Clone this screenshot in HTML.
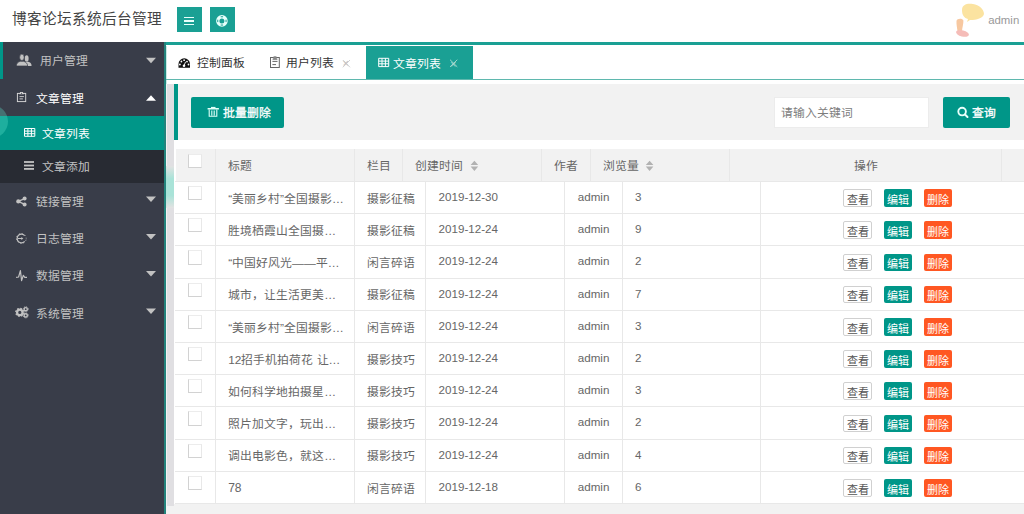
<!DOCTYPE html>
<html lang="zh-CN"><head><meta charset="utf-8">
<style>
*{margin:0;padding:0;box-sizing:border-box}
html,body{width:1024px;height:514px;overflow:hidden;background:#fff;font-family:"Liberation Sans",sans-serif;}
.a{position:absolute}
.t{position:absolute;white-space:nowrap}
svg{position:absolute;overflow:visible}
</style></head><body>
<div class="t" style="left:12px;top:11.9px;font-size:14.65px;line-height:14.65px;color:#444;">博客论坛系统后台管理</div>
<div class="a" style="left:177px;top:7px;width:24.5px;height:25px;background:#1aa094;"></div>
<div class="a" style="left:210px;top:7px;width:24.5px;height:25px;background:#1aa094;"></div>
<div class="a" style="left:184px;top:16.5px;width:10px;height:1.6px;background:#e8fffb;"></div>
<div class="a" style="left:184px;top:20.2px;width:10px;height:1.6px;background:#e8fffb;"></div>
<div class="a" style="left:184px;top:23.9px;width:10px;height:1.6px;background:#e8fffb;"></div>
<svg style="left:0;top:0" width="1024" height="42"><path d="M962 10 C962 4 968 3 973 4 C979 5 984 9 984 14 C983 18 977 20 970 20 L967 22 L968 19 C964 18 962 15 962 10Z" fill="#fbe3a0"/><path d="M956.5 21 C956.8 18.3 962.5 18 963.4 20.5 C963.6 23.5 962.2 27.5 962 31.5 L957.6 31.5 C957 28 956.3 24 956.5 21Z" fill="#f7c8a0"/><ellipse cx="962.5" cy="33.4" rx="6.6" ry="3.1" transform="rotate(14 962.5 33.4)" fill="#f5bcb8"/></svg>
<div class="t" style="left:988.2px;top:15.3px;font-size:11.4px;line-height:11.4px;color:#999;">admin</div>
<div class="a" style="left:0px;top:42px;width:164px;height:472px;background:#393d49;"></div>
<div class="a" style="left:0px;top:42px;width:3px;height:37px;background:#009688;"></div>
<div class="a" style="left:0px;top:116px;width:164px;height:33.5px;background:#009688;"></div>
<div class="a" style="left:0px;top:149.5px;width:164px;height:33px;background:#282b33;"></div>
<div class="t" style="left:40px;top:56.4px;font-size:11.8px;line-height:11.8px;color:#c2c2c2;">用户管理</div>
<div class="t" style="left:36px;top:93.9px;font-size:11.8px;line-height:11.8px;color:#fff;">文章管理</div>
<div class="t" style="left:42.3px;top:129.4px;font-size:11.8px;line-height:11.8px;color:#fff;">文章列表</div>
<div class="t" style="left:42px;top:161.9px;font-size:11.8px;line-height:11.8px;color:#c2c2c2;">文章添加</div>
<div class="t" style="left:36px;top:196.9px;font-size:11.8px;line-height:11.8px;color:#c2c2c2;">链接管理</div>
<div class="t" style="left:36px;top:234.4px;font-size:11.8px;line-height:11.8px;color:#c2c2c2;">日志管理</div>
<div class="t" style="left:36px;top:271.4px;font-size:11.8px;line-height:11.8px;color:#c2c2c2;">数据管理</div>
<div class="t" style="left:36px;top:308.9px;font-size:11.8px;line-height:11.8px;color:#c2c2c2;">系统管理</div>
<svg style="left:0;top:0" width="1" height="1"><path d="M146 57.8L156 57.8L151 63.3Z" fill="#c2c2c2"/></svg>
<svg style="left:0;top:0" width="1" height="1"><path d="M146 100.7L156 100.7L151 95.2Z" fill="#fff"/></svg>
<svg style="left:0;top:0" width="1" height="1"><path d="M146 196.5L156 196.5L151 202.0Z" fill="#c2c2c2"/></svg>
<svg style="left:0;top:0" width="1" height="1"><path d="M146 234L156 234L151 239.5Z" fill="#c2c2c2"/></svg>
<svg style="left:0;top:0" width="1" height="1"><path d="M146 271L156 271L151 276.5Z" fill="#c2c2c2"/></svg>
<svg style="left:0;top:0" width="1" height="1"><path d="M146 308.5L156 308.5L151 314.0Z" fill="#c2c2c2"/></svg>
<div class="a" style="left:164px;top:42px;width:2px;height:472px;background:#23837c;"></div>
<div class="a" style="left:166px;top:45.5px;width:1px;height:472px;background:#c8ebe5;"></div>
<div class="a" style="left:166px;top:42px;width:858px;height:3.4px;background:#1aa094;"></div>
<div class="a" style="left:166px;top:79px;width:858px;height:1px;background:#5fb8ae;"></div>
<div class="a" style="left:366px;top:46.3px;width:107px;height:32.7px;background:#1aa094;"></div>
<div class="t" style="left:197px;top:58.4px;font-size:11.8px;line-height:11.8px;color:#333;">控制面板</div>
<div class="t" style="left:285.5px;top:58.4px;font-size:11.8px;line-height:11.8px;color:#333;">用户列表</div>
<div class="t" style="left:392.5px;top:58.9px;font-size:11.8px;line-height:11.8px;color:#fff;">文章列表</div>
<div class="t" style="left:342.5px;top:58px;font-size:11px;line-height:11px;color:#bbb;">×</div>
<div class="t" style="left:450px;top:58.5px;font-size:11px;line-height:11px;color:#9fd6cf;">×</div>
<div class="a" style="left:166px;top:84px;width:858px;height:430px;background:#f2f2f2;"></div>
<div class="a" style="left:167px;top:84px;width:7px;height:422px;background:#e0dfe2;"></div>
<div class="a" style="left:174px;top:84px;width:4.4px;height:56px;background:#009688;"></div>
<div class="a" style="left:174px;top:140px;width:850px;height:363.5px;background:#fff;"></div>
<div class="a" style="left:191px;top:97px;width:93px;height:31px;background:#009688;border-radius:2px"></div>
<div class="t" style="left:223px;top:108.4px;font-size:11.8px;line-height:11.8px;color:#fff;-webkit-text-stroke:0.3px #fff">批量删除</div>
<div class="a" style="left:773.5px;top:97px;width:155.5px;height:30.5px;background:#fff;border:1px solid #ececec"></div>
<div class="t" style="left:781.3px;top:108.4px;font-size:11.8px;line-height:11.8px;color:#7d7d7d;">请输入关键词</div>
<div class="a" style="left:943px;top:97px;width:66.5px;height:31px;background:#009688;border-radius:2px"></div>
<div class="t" style="left:971.5px;top:107.9px;font-size:11.8px;line-height:11.8px;color:#fff;-webkit-text-stroke:0.3px #fff">查询</div>
<div class="a" style="left:175.5px;top:148.8px;width:848.5px;height:32.599999999999994px;background:#f2f2f2;"></div>
<div class="a" style="left:214.8px;top:148.8px;width:1px;height:32.599999999999994px;background:#e8e8e8;"></div>
<div class="a" style="left:353.7px;top:148.8px;width:1px;height:32.599999999999994px;background:#e8e8e8;"></div>
<div class="a" style="left:401.8px;top:148.8px;width:1px;height:32.599999999999994px;background:#e8e8e8;"></div>
<div class="a" style="left:540.9px;top:148.8px;width:1px;height:32.599999999999994px;background:#e8e8e8;"></div>
<div class="a" style="left:589.9px;top:148.8px;width:1px;height:32.599999999999994px;background:#e8e8e8;"></div>
<div class="a" style="left:728.9px;top:148.8px;width:1px;height:32.599999999999994px;background:#e8e8e8;"></div>
<div class="a" style="left:1001.0px;top:148.8px;width:1px;height:32.599999999999994px;background:#e8e8e8;"></div>
<div class="a" style="left:174.5px;top:180.9px;width:849.5px;height:1px;background:#e8e8e8;"></div>
<div class="a" style="left:174.5px;top:213.10000000000002px;width:849.5px;height:1px;background:#e8e8e8;"></div>
<div class="a" style="left:174.5px;top:245.3px;width:849.5px;height:1px;background:#e8e8e8;"></div>
<div class="a" style="left:174.5px;top:277.5px;width:849.5px;height:1px;background:#e8e8e8;"></div>
<div class="a" style="left:174.5px;top:309.70000000000005px;width:849.5px;height:1px;background:#e8e8e8;"></div>
<div class="a" style="left:174.5px;top:341.9px;width:849.5px;height:1px;background:#e8e8e8;"></div>
<div class="a" style="left:174.5px;top:374.1px;width:849.5px;height:1px;background:#e8e8e8;"></div>
<div class="a" style="left:174.5px;top:406.30000000000007px;width:849.5px;height:1px;background:#e8e8e8;"></div>
<div class="a" style="left:174.5px;top:438.5px;width:849.5px;height:1px;background:#e8e8e8;"></div>
<div class="a" style="left:174.5px;top:470.70000000000005px;width:849.5px;height:1px;background:#e8e8e8;"></div>
<div class="a" style="left:174.5px;top:502.9px;width:849.5px;height:1px;background:#e8e8e8;"></div>
<div class="a" style="left:214.8px;top:181.4px;width:1px;height:322.0px;background:#e8e8e8;"></div>
<div class="a" style="left:353.7px;top:181.4px;width:1px;height:322.0px;background:#e8e8e8;"></div>
<div class="a" style="left:425.1px;top:181.4px;width:1px;height:322.0px;background:#e8e8e8;"></div>
<div class="a" style="left:564.1px;top:181.4px;width:1px;height:322.0px;background:#e8e8e8;"></div>
<div class="a" style="left:621.7px;top:181.4px;width:1px;height:322.0px;background:#e8e8e8;"></div>
<div class="a" style="left:760.3px;top:181.4px;width:1px;height:322.0px;background:#e8e8e8;"></div>
<div class="t" style="left:228.2px;top:161.4px;font-size:11.8px;line-height:11.8px;color:#666;">标题</div>
<div class="t" style="left:367px;top:161.4px;font-size:11.8px;line-height:11.8px;color:#666;">栏目</div>
<div class="t" style="left:414.8px;top:161.4px;font-size:11.8px;line-height:11.8px;color:#666;">创建时间</div>
<div class="t" style="left:554.2px;top:161.4px;font-size:11.8px;line-height:11.8px;color:#666;">作者</div>
<div class="t" style="left:602.6px;top:161.4px;font-size:11.8px;line-height:11.8px;color:#666;">浏览量</div>
<div class="t" style="left:854px;top:161.2px;font-size:11.8px;line-height:11.8px;color:#666;">操作</div>
<svg style="left:0;top:0" width="1" height="1"><path d="M470.6 165L478.20000000000005 165L474.40000000000003 160.7Z M470.6 166.5L478.20000000000005 166.5L474.40000000000003 170.9Z" fill="#b2b2b2"/></svg>
<svg style="left:0;top:0" width="1" height="1"><path d="M645.8 165L653.4 165L649.5999999999999 160.7Z M645.8 166.5L653.4 166.5L649.5999999999999 170.9Z" fill="#b2b2b2"/></svg>
<div class="a" style="left:187.6px;top:153.7px;width:14px;height:13.9px;background:#fff;border:1px solid;border-color:#ececec #e8e8e8 #d2d2d2 #d2d2d2"></div>
<div class="a" style="left:187.6px;top:186.0px;width:14px;height:14.2px;background:#fff;border:1px solid;border-color:#ececec #e8e8e8 #d2d2d2 #d2d2d2"></div>
<div class="t" style="left:228.2px;top:193.8px;font-size:11.8px;line-height:11.8px;color:#666;">“美丽乡村”全国摄影…</div>
<div class="t" style="left:366.8px;top:193.8px;font-size:11.8px;line-height:11.8px;color:#666;">摄影征稿</div>
<div class="t" style="left:438.6px;top:191.0px;font-size:11.6px;line-height:11.6px;color:#666;">2019-12-30</div>
<div class="t" style="left:577.8px;top:191.0px;font-size:11.6px;line-height:11.6px;color:#666;">admin</div>
<div class="t" style="left:634.9px;top:191.0px;font-size:11.6px;line-height:11.6px;color:#666;">3</div>
<div class="a" style="left:843.3px;top:189.1px;width:28.6px;height:17.7px;background:#fff;border:1px solid #d0d0d0;border-radius:2px"></div>
<div class="t" style="left:846.8px;top:194.7px;font-size:11px;line-height:11px;color:#555;">查看</div>
<div class="a" style="left:884.1px;top:189.1px;width:27.8px;height:17.7px;background:#009688;border-radius:2px"></div>
<div class="t" style="left:887px;top:194.7px;font-size:11px;line-height:11px;color:#fff;">编辑</div>
<div class="a" style="left:923.9px;top:189.1px;width:27.7px;height:17.7px;background:#ff5722;border-radius:2px"></div>
<div class="t" style="left:927px;top:194.7px;font-size:11px;line-height:11px;color:#fff;">删除</div>
<div class="a" style="left:187.6px;top:218.20000000000002px;width:14px;height:14.2px;background:#fff;border:1px solid;border-color:#ececec #e8e8e8 #d2d2d2 #d2d2d2"></div>
<div class="t" style="left:228.2px;top:226.0px;font-size:11.8px;line-height:11.8px;color:#666;">胜境栖霞山全国摄…</div>
<div class="t" style="left:366.8px;top:226.0px;font-size:11.8px;line-height:11.8px;color:#666;">摄影征稿</div>
<div class="t" style="left:438.6px;top:223.20000000000002px;font-size:11.6px;line-height:11.6px;color:#666;">2019-12-24</div>
<div class="t" style="left:577.8px;top:223.20000000000002px;font-size:11.6px;line-height:11.6px;color:#666;">admin</div>
<div class="t" style="left:634.9px;top:223.20000000000002px;font-size:11.6px;line-height:11.6px;color:#666;">9</div>
<div class="a" style="left:843.3px;top:221.3px;width:28.6px;height:17.7px;background:#fff;border:1px solid #d0d0d0;border-radius:2px"></div>
<div class="t" style="left:846.8px;top:226.9px;font-size:11px;line-height:11px;color:#555;">查看</div>
<div class="a" style="left:884.1px;top:221.3px;width:27.8px;height:17.7px;background:#009688;border-radius:2px"></div>
<div class="t" style="left:887px;top:226.9px;font-size:11px;line-height:11px;color:#fff;">编辑</div>
<div class="a" style="left:923.9px;top:221.3px;width:27.7px;height:17.7px;background:#ff5722;border-radius:2px"></div>
<div class="t" style="left:927px;top:226.9px;font-size:11px;line-height:11px;color:#fff;">删除</div>
<div class="a" style="left:187.6px;top:250.4px;width:14px;height:14.2px;background:#fff;border:1px solid;border-color:#ececec #e8e8e8 #d2d2d2 #d2d2d2"></div>
<div class="t" style="left:228.2px;top:258.2px;font-size:11.8px;line-height:11.8px;color:#666;">“中国好风光——平…</div>
<div class="t" style="left:366.8px;top:258.2px;font-size:11.8px;line-height:11.8px;color:#666;">闲言碎语</div>
<div class="t" style="left:438.6px;top:255.4px;font-size:11.6px;line-height:11.6px;color:#666;">2019-12-24</div>
<div class="t" style="left:577.8px;top:255.4px;font-size:11.6px;line-height:11.6px;color:#666;">admin</div>
<div class="t" style="left:634.9px;top:255.4px;font-size:11.6px;line-height:11.6px;color:#666;">2</div>
<div class="a" style="left:843.3px;top:253.5px;width:28.6px;height:17.7px;background:#fff;border:1px solid #d0d0d0;border-radius:2px"></div>
<div class="t" style="left:846.8px;top:259.1px;font-size:11px;line-height:11px;color:#555;">查看</div>
<div class="a" style="left:884.1px;top:253.5px;width:27.8px;height:17.7px;background:#009688;border-radius:2px"></div>
<div class="t" style="left:887px;top:259.1px;font-size:11px;line-height:11px;color:#fff;">编辑</div>
<div class="a" style="left:923.9px;top:253.5px;width:27.7px;height:17.7px;background:#ff5722;border-radius:2px"></div>
<div class="t" style="left:927px;top:259.1px;font-size:11px;line-height:11px;color:#fff;">删除</div>
<div class="a" style="left:187.6px;top:282.6px;width:14px;height:14.2px;background:#fff;border:1px solid;border-color:#ececec #e8e8e8 #d2d2d2 #d2d2d2"></div>
<div class="t" style="left:228.2px;top:290.4px;font-size:11.8px;line-height:11.8px;color:#666;">城市，让生活更美…</div>
<div class="t" style="left:366.8px;top:290.4px;font-size:11.8px;line-height:11.8px;color:#666;">摄影征稿</div>
<div class="t" style="left:438.6px;top:287.6px;font-size:11.6px;line-height:11.6px;color:#666;">2019-12-24</div>
<div class="t" style="left:577.8px;top:287.6px;font-size:11.6px;line-height:11.6px;color:#666;">admin</div>
<div class="t" style="left:634.9px;top:287.6px;font-size:11.6px;line-height:11.6px;color:#666;">7</div>
<div class="a" style="left:843.3px;top:285.7px;width:28.6px;height:17.7px;background:#fff;border:1px solid #d0d0d0;border-radius:2px"></div>
<div class="t" style="left:846.8px;top:291.3px;font-size:11px;line-height:11px;color:#555;">查看</div>
<div class="a" style="left:884.1px;top:285.7px;width:27.8px;height:17.7px;background:#009688;border-radius:2px"></div>
<div class="t" style="left:887px;top:291.3px;font-size:11px;line-height:11px;color:#fff;">编辑</div>
<div class="a" style="left:923.9px;top:285.7px;width:27.7px;height:17.7px;background:#ff5722;border-radius:2px"></div>
<div class="t" style="left:927px;top:291.3px;font-size:11px;line-height:11px;color:#fff;">删除</div>
<div class="a" style="left:187.6px;top:314.80000000000007px;width:14px;height:14.2px;background:#fff;border:1px solid;border-color:#ececec #e8e8e8 #d2d2d2 #d2d2d2"></div>
<div class="t" style="left:228.2px;top:322.6px;font-size:11.8px;line-height:11.8px;color:#666;">“美丽乡村”全国摄影…</div>
<div class="t" style="left:366.8px;top:322.6px;font-size:11.8px;line-height:11.8px;color:#666;">闲言碎语</div>
<div class="t" style="left:438.6px;top:319.80000000000007px;font-size:11.6px;line-height:11.6px;color:#666;">2019-12-24</div>
<div class="t" style="left:577.8px;top:319.80000000000007px;font-size:11.6px;line-height:11.6px;color:#666;">admin</div>
<div class="t" style="left:634.9px;top:319.80000000000007px;font-size:11.6px;line-height:11.6px;color:#666;">3</div>
<div class="a" style="left:843.3px;top:317.90000000000003px;width:28.6px;height:17.7px;background:#fff;border:1px solid #d0d0d0;border-radius:2px"></div>
<div class="t" style="left:846.8px;top:323.5px;font-size:11px;line-height:11px;color:#555;">查看</div>
<div class="a" style="left:884.1px;top:317.90000000000003px;width:27.8px;height:17.7px;background:#009688;border-radius:2px"></div>
<div class="t" style="left:887px;top:323.5px;font-size:11px;line-height:11px;color:#fff;">编辑</div>
<div class="a" style="left:923.9px;top:317.90000000000003px;width:27.7px;height:17.7px;background:#ff5722;border-radius:2px"></div>
<div class="t" style="left:927px;top:323.5px;font-size:11px;line-height:11px;color:#fff;">删除</div>
<div class="a" style="left:187.6px;top:347.0px;width:14px;height:14.2px;background:#fff;border:1px solid;border-color:#ececec #e8e8e8 #d2d2d2 #d2d2d2"></div>
<div class="t" style="left:228.2px;top:354.8px;font-size:11.8px;line-height:11.8px;color:#666;">12招手机拍荷花 让…</div>
<div class="t" style="left:366.8px;top:354.8px;font-size:11.8px;line-height:11.8px;color:#666;">摄影技巧</div>
<div class="t" style="left:438.6px;top:352.0px;font-size:11.6px;line-height:11.6px;color:#666;">2019-12-24</div>
<div class="t" style="left:577.8px;top:352.0px;font-size:11.6px;line-height:11.6px;color:#666;">admin</div>
<div class="t" style="left:634.9px;top:352.0px;font-size:11.6px;line-height:11.6px;color:#666;">2</div>
<div class="a" style="left:843.3px;top:350.09999999999997px;width:28.6px;height:17.7px;background:#fff;border:1px solid #d0d0d0;border-radius:2px"></div>
<div class="t" style="left:846.8px;top:355.7px;font-size:11px;line-height:11px;color:#555;">查看</div>
<div class="a" style="left:884.1px;top:350.09999999999997px;width:27.8px;height:17.7px;background:#009688;border-radius:2px"></div>
<div class="t" style="left:887px;top:355.7px;font-size:11px;line-height:11px;color:#fff;">编辑</div>
<div class="a" style="left:923.9px;top:350.09999999999997px;width:27.7px;height:17.7px;background:#ff5722;border-radius:2px"></div>
<div class="t" style="left:927px;top:355.7px;font-size:11px;line-height:11px;color:#fff;">删除</div>
<div class="a" style="left:187.6px;top:379.20000000000005px;width:14px;height:14.2px;background:#fff;border:1px solid;border-color:#ececec #e8e8e8 #d2d2d2 #d2d2d2"></div>
<div class="t" style="left:228.2px;top:387.0px;font-size:11.8px;line-height:11.8px;color:#666;">如何科学地拍摄星…</div>
<div class="t" style="left:366.8px;top:387.0px;font-size:11.8px;line-height:11.8px;color:#666;">摄影技巧</div>
<div class="t" style="left:438.6px;top:384.20000000000005px;font-size:11.6px;line-height:11.6px;color:#666;">2019-12-24</div>
<div class="t" style="left:577.8px;top:384.20000000000005px;font-size:11.6px;line-height:11.6px;color:#666;">admin</div>
<div class="t" style="left:634.9px;top:384.20000000000005px;font-size:11.6px;line-height:11.6px;color:#666;">3</div>
<div class="a" style="left:843.3px;top:382.3px;width:28.6px;height:17.7px;background:#fff;border:1px solid #d0d0d0;border-radius:2px"></div>
<div class="t" style="left:846.8px;top:387.9px;font-size:11px;line-height:11px;color:#555;">查看</div>
<div class="a" style="left:884.1px;top:382.3px;width:27.8px;height:17.7px;background:#009688;border-radius:2px"></div>
<div class="t" style="left:887px;top:387.9px;font-size:11px;line-height:11px;color:#fff;">编辑</div>
<div class="a" style="left:923.9px;top:382.3px;width:27.7px;height:17.7px;background:#ff5722;border-radius:2px"></div>
<div class="t" style="left:927px;top:387.9px;font-size:11px;line-height:11px;color:#fff;">删除</div>
<div class="a" style="left:187.6px;top:411.4000000000001px;width:14px;height:14.2px;background:#fff;border:1px solid;border-color:#ececec #e8e8e8 #d2d2d2 #d2d2d2"></div>
<div class="t" style="left:228.2px;top:419.2px;font-size:11.8px;line-height:11.8px;color:#666;">照片加文字，玩出…</div>
<div class="t" style="left:366.8px;top:419.2px;font-size:11.8px;line-height:11.8px;color:#666;">摄影技巧</div>
<div class="t" style="left:438.6px;top:416.4000000000001px;font-size:11.6px;line-height:11.6px;color:#666;">2019-12-24</div>
<div class="t" style="left:577.8px;top:416.4000000000001px;font-size:11.6px;line-height:11.6px;color:#666;">admin</div>
<div class="t" style="left:634.9px;top:416.4000000000001px;font-size:11.6px;line-height:11.6px;color:#666;">2</div>
<div class="a" style="left:843.3px;top:414.50000000000006px;width:28.6px;height:17.7px;background:#fff;border:1px solid #d0d0d0;border-radius:2px"></div>
<div class="t" style="left:846.8px;top:420.1px;font-size:11px;line-height:11px;color:#555;">查看</div>
<div class="a" style="left:884.1px;top:414.50000000000006px;width:27.8px;height:17.7px;background:#009688;border-radius:2px"></div>
<div class="t" style="left:887px;top:420.1px;font-size:11px;line-height:11px;color:#fff;">编辑</div>
<div class="a" style="left:923.9px;top:414.50000000000006px;width:27.7px;height:17.7px;background:#ff5722;border-radius:2px"></div>
<div class="t" style="left:927px;top:420.1px;font-size:11px;line-height:11px;color:#fff;">删除</div>
<div class="a" style="left:187.6px;top:443.6px;width:14px;height:14.2px;background:#fff;border:1px solid;border-color:#ececec #e8e8e8 #d2d2d2 #d2d2d2"></div>
<div class="t" style="left:228.2px;top:451.4px;font-size:11.8px;line-height:11.8px;color:#666;">调出电影色，就这…</div>
<div class="t" style="left:366.8px;top:451.4px;font-size:11.8px;line-height:11.8px;color:#666;">摄影技巧</div>
<div class="t" style="left:438.6px;top:448.6px;font-size:11.6px;line-height:11.6px;color:#666;">2019-12-24</div>
<div class="t" style="left:577.8px;top:448.6px;font-size:11.6px;line-height:11.6px;color:#666;">admin</div>
<div class="t" style="left:634.9px;top:448.6px;font-size:11.6px;line-height:11.6px;color:#666;">4</div>
<div class="a" style="left:843.3px;top:446.7px;width:28.6px;height:17.7px;background:#fff;border:1px solid #d0d0d0;border-radius:2px"></div>
<div class="t" style="left:846.8px;top:452.3px;font-size:11px;line-height:11px;color:#555;">查看</div>
<div class="a" style="left:884.1px;top:446.7px;width:27.8px;height:17.7px;background:#009688;border-radius:2px"></div>
<div class="t" style="left:887px;top:452.3px;font-size:11px;line-height:11px;color:#fff;">编辑</div>
<div class="a" style="left:923.9px;top:446.7px;width:27.7px;height:17.7px;background:#ff5722;border-radius:2px"></div>
<div class="t" style="left:927px;top:452.3px;font-size:11px;line-height:11px;color:#fff;">删除</div>
<div class="a" style="left:187.6px;top:475.80000000000007px;width:14px;height:14.2px;background:#fff;border:1px solid;border-color:#ececec #e8e8e8 #d2d2d2 #d2d2d2"></div>
<div class="t" style="left:228.2px;top:482.20000000000005px;font-size:12px;line-height:12px;color:#666;">78</div>
<div class="t" style="left:366.8px;top:483.6px;font-size:11.8px;line-height:11.8px;color:#666;">闲言碎语</div>
<div class="t" style="left:438.6px;top:480.80000000000007px;font-size:11.6px;line-height:11.6px;color:#666;">2019-12-18</div>
<div class="t" style="left:577.8px;top:480.80000000000007px;font-size:11.6px;line-height:11.6px;color:#666;">admin</div>
<div class="t" style="left:634.9px;top:480.80000000000007px;font-size:11.6px;line-height:11.6px;color:#666;">6</div>
<div class="a" style="left:843.3px;top:478.90000000000003px;width:28.6px;height:17.7px;background:#fff;border:1px solid #d0d0d0;border-radius:2px"></div>
<div class="t" style="left:846.8px;top:484.5px;font-size:11px;line-height:11px;color:#555;">查看</div>
<div class="a" style="left:884.1px;top:478.90000000000003px;width:27.8px;height:17.7px;background:#009688;border-radius:2px"></div>
<div class="t" style="left:887px;top:484.5px;font-size:11px;line-height:11px;color:#fff;">编辑</div>
<div class="a" style="left:923.9px;top:478.90000000000003px;width:27.7px;height:17.7px;background:#ff5722;border-radius:2px"></div>
<div class="t" style="left:927px;top:484.5px;font-size:11px;line-height:11px;color:#fff;">删除</div>
<svg style="left:0;top:0;position:absolute" width="1024" height="514"><ellipse cx="26.7" cy="58.4" rx="1.9" ry="3.2" fill="#c2c2c2"/><path d="M25.5 66 L31.6 66 C31.6 63.4 30.2 62.2 28.2 61.8 L25.5 61.8Z" fill="#c2c2c2"/><path d="M16.3 66 C16.3 63.2 18.3 61.8 20.3 61.3 L23.6 61.3 C25.6 61.8 27.6 63.2 27.6 66 Z" fill="#c2c2c2" stroke="#393d49" stroke-width="0.7"/><ellipse cx="21.9" cy="57.3" rx="2.3" ry="3.2" fill="#c2c2c2" stroke="#393d49" stroke-width="0.7"/><rect x="17.4" y="93.4" width="8.3" height="8.2" fill="none" stroke="#d6d6d6" stroke-width="0.95"/><path d="M19.2 94.3 L20.2 92 L22.8 92 L23.8 94.3Z" fill="#d6d6d6"/><circle cx="21.5" cy="93.2" r="0.55" fill="#393d49"/><path d="M19.5 96.6 H23.9 M19.5 98.9 H22.9" stroke="#d6d6d6" stroke-width="0.9"/><path d="M24.5 128.5 h10.3 v7.8 h-10.3Z M27.9 128.5 v7.8 M31.4 128.5 v7.8 M24.5 131.1 h10.3 M24.5 133.7 h10.3" fill="none" stroke="#fff" stroke-width="1"/><rect x="24" y="161.1" width="10" height="1.8" fill="#c2c2c2"/><rect x="24" y="164.6" width="10" height="1.8" fill="#c2c2c2"/><rect x="24" y="168.0" width="10" height="1.8" fill="#c2c2c2"/><g fill="#c2c2c2"><circle cx="24.6" cy="198.6" r="2"/><circle cx="18.3" cy="201.4" r="2.1"/><circle cx="24.6" cy="204.4" r="2"/></g><path d="M18.3 201.4 L24.6 198.6 M18.3 201.4 L24.6 204.4" stroke="#c2c2c2" stroke-width="1.2"/><path d="M24.6 235.6 A4.3 4.3 0 1 0 24.6 241.4" fill="none" stroke="#c2c2c2" stroke-width="1.2"/><circle cx="21.3" cy="238.5" r="4.9" fill="none" stroke="#c2c2c2" stroke-width="1" stroke-dasharray="1 2.1" stroke-dashoffset="8"/><path d="M18 238.5 H22.3" stroke="#c2c2c2" stroke-width="1"/><path d="M21.3 237 L23.3 238.5 L21.3 240Z" fill="#c2c2c2"/><polyline points="16.1,277.3 18.6,277 20.4,270.6 21.6,280.6 23.3,275.4 24.8,277.4 27,277.4" fill="none" stroke="#c2c2c2" stroke-width="1.2" stroke-linejoin="round"/><circle cx="19.8" cy="312.4" r="2.7" fill="none" stroke="#c2c2c2" stroke-width="2.2"/><circle cx="19.8" cy="312.4" r="4" fill="none" stroke="#c2c2c2" stroke-width="1.3" stroke-dasharray="1.6 1.54"/><circle cx="25.7" cy="309.2" r="1.6" fill="none" stroke="#c2c2c2" stroke-width="1.4"/><circle cx="25.7" cy="315.4" r="1.6" fill="none" stroke="#c2c2c2" stroke-width="1.4"/><circle cx="25.7" cy="309.2" r="2.5" fill="none" stroke="#c2c2c2" stroke-width="0.9" stroke-dasharray="1 1"/><circle cx="25.7" cy="315.4" r="2.5" fill="none" stroke="#c2c2c2" stroke-width="0.9" stroke-dasharray="1 1"/><path d="M178.5 67.8 L178.5 64 A5.75 5.75 0 0 1 190 64 L190 67.8 Z" fill="#111"/><g fill="#fff"><circle cx="179.9" cy="64.5" r="0.9"/><circle cx="181.4" cy="61.5" r="0.9"/><circle cx="184.1" cy="60.2" r="0.9"/><circle cx="187" cy="61.6" r="0.9"/><circle cx="188.5" cy="64.5" r="0.9"/><circle cx="184" cy="65.8" r="1.3"/></g><path d="M184 65.8 L185.6 61.8" stroke="#fff" stroke-width="0.9"/><rect x="270.5" y="57.5" width="8.8" height="10" fill="none" stroke="#666" stroke-width="1"/><path d="M272.6 59.2 H277.4 M272.4 61.4 H277.5 M272.4 64.6 H276" stroke="#666" stroke-width="1"/><path d="M273.2 59 L273.6 56.3 L276.4 56.3 L276.8 59Z" fill="#888"/><path d="M378.7 58.3 h10 v8.3 h-10Z M382 58.3 v8.3 M385.4 58.3 v8.3 M378.7 61.1 h10 M378.7 63.8 h10" fill="none" stroke="#fff" stroke-width="1"/><path d="M342.8 60 L350 67.3 M350 60 L342.8 67.3" stroke="#c8c8c8" stroke-width="0.9"/><path d="M450 59.7 L457.3 66.9 M457.3 59.7 L450 66.9" stroke="#a9dcd5" stroke-width="0.9"/><g fill="#e0fff8"><rect x="207.5" y="107.9" width="11.5" height="1.6" rx="0.6"/><rect x="211" y="106.9" width="4.5" height="1.3"/></g><path d="M209.2 109.4 V116.3 H216.8 V109.4 M211.8 110.6 V115.4 M214.2 110.6 V115.4" fill="none" stroke="#e0fff8" stroke-width="1.1"/><circle cx="962.1" cy="111.6" r="3.8" fill="none" stroke="#e8fffb" stroke-width="1.9"/><path d="M965 114.5 L967.5 117" stroke="#e8fffb" stroke-width="2" stroke-linecap="round"/><circle cx="221.9" cy="20.9" r="4.15" fill="none" stroke="#e8fffb" stroke-width="3.3"/><path d="M220.7 16.75 H223.1 M220.7 25.05 H223.1 M217.75 19.7 V22.1 M226.05 19.7 V22.1" stroke="#1aa094" stroke-width="1"/></svg>
<div class="a" style="left:-25.5px;top:105.3px;width:33px;height:33px;border-radius:50%;background:rgba(100,235,210,0.3)"></div>
<div class="a" style="left:166px;top:166px;width:8px;height:42px;background:linear-gradient(#e2e2e2,#a9e3d8 30%,#a9e3d8 70%,#e2e2e2)"></div>
</body></html>
